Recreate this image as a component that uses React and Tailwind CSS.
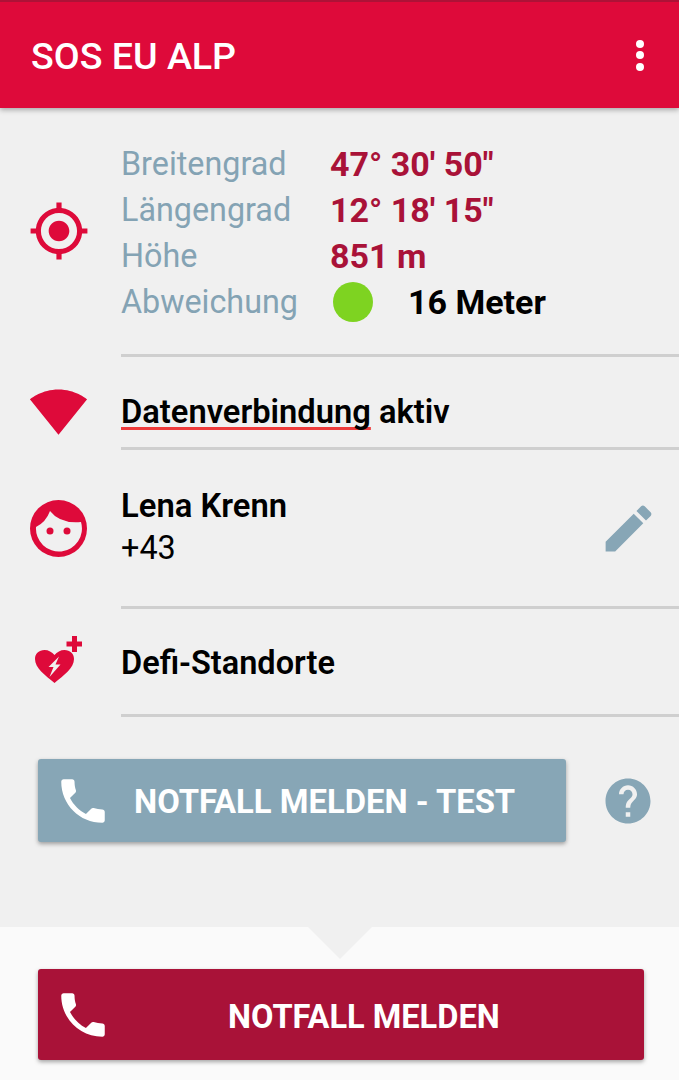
const font = { fontFamily: 'Roboto, sans-serif' }

const Divider = () => <div className="ml-[121px] h-[3px] bg-[#cfcfcf]" />

const PhoneIcon = () => (
  <svg viewBox="0 0 24 24" className="w-[58px] h-[58px] fill-white shrink-0">
    <path d="M6.62 10.79c1.44 2.83 3.76 5.14 6.59 6.59l2.2-2.2c.27-.27.67-.36 1.02-.24 1.12.37 2.33.57 3.57.57.55 0 1 .45 1 1V20c0 .55-.45 1-1 1-9.39 0-17-7.61-17-17 0-.55.45-1 1-1h3.5c.55 0 1 .45 1 1 0 1.25.2 2.45.57 3.57.11.35.03.74-.25 1.02l-2.2 2.2z" />
  </svg>
)

const CoordRow = ({ label, value }) => (
  <div className="flex items-center h-[46px]">
    <span className="w-[209px] mt-[1px] text-[32.3px] text-[#84a3b4]">{label}</span>
    <span className="text-[34px] font-bold text-[#a91238]">{value}</span>
  </div>
)

export default function App() {
  return (
    <div style={font} className="flex flex-col w-[679px] h-[1080px] overflow-hidden bg-[#f0f0f0] text-black">
      {/* Toolbar */}
      <div className="relative z-10 flex items-center justify-between h-[108px] pl-[31px] pr-[35px] bg-[#de0a3a] border-t-2 border-[#ad1237] shadow-[0_2px_5px_rgba(0,0,0,0.3)]">
        <span className="mt-[3px] text-[37.6px] font-medium text-white">SOS EU ALP</span>
        <div className="flex flex-col gap-[3.5px]">
          <div className="w-[8px] h-[8px] rounded-full bg-white" />
          <div className="w-[8px] h-[8px] rounded-full bg-white" />
          <div className="w-[8px] h-[8px] rounded-full bg-white" />
        </div>
      </div>

      {/* Position */}
      <div className="flex items-center pt-[33px] pb-[29px]">
        <div className="w-[122px] pl-[28px]">
          <svg viewBox="0 0 24 24" className="w-[62px] h-[62px] fill-[#de0a3a] -mt-[4px]">
            <path d="M12 8c-2.21 0-4 1.79-4 4s1.79 4 4 4 4-1.79 4-4-1.79-4-4-4zm8.94 3c-.46-4.17-3.77-7.48-7.94-7.94V1h-2v2.06C6.83 3.52 3.52 6.83 3.06 11H1v2h2.06c.46 4.17 3.77 7.48 7.94 7.94V23h2v-2.06c4.17-.46 7.48-3.77 7.94-7.94H23v-2h-2.06zM12 19c-3.87 0-7-3.13-7-7s3.13-7 7-7 7 3.13 7 7-3.13 7-7 7z" />
          </svg>
        </div>
        <div className="-ml-[1px]">
          <CoordRow label="Breitengrad" value={'47° 30\' 50"'} />
          <CoordRow label="Längengrad" value={'12° 18\' 15"'} />
          <CoordRow label="Höhe" value="851 m" />
          <div className="flex items-center h-[46px]">
            <span className="w-[212px] mt-[1px] text-[32.3px] text-[#84a3b4]">Abweichung</span>
            <div className="w-[40px] h-[40px] rounded-full bg-[#7ed321]" />
            <span className="ml-[35px] text-[34px] font-bold">16 Meter</span>
          </div>
        </div>
      </div>
      <Divider />

      {/* Data connection */}
      <div className="flex items-center h-[90px] pt-[21px]">
        <div className="w-[121px] pl-[29px]">
          <svg viewBox="0 0 24 24" className="w-[59px] h-[59px] fill-[#de0a3a] -mt-[3px]">
            <path d="M12.01 21.49L23.64 7c-.45-.34-4.93-4-11.64-4C5.28 3 .81 6.66.36 7l11.63 14.49.01.01.01-.01z" />
          </svg>
        </div>
        <span className="text-[32.7px] font-semibold">
          <span className="underline decoration-[#ee3b3b] decoration-[3px] underline-offset-[4px] [text-decoration-skip-ink:none]">Datenverbindung</span> aktiv
        </span>
      </div>
      <Divider />

      {/* Contact */}
      <div className="flex items-center justify-between h-[156px] pr-[20px]">
        <div className="flex items-center">
          <div className="w-[121px] pl-[30px]">
            <svg viewBox="0 0 57 57" className="w-[57px] h-[57px]">
              <circle cx="28.5" cy="28.5" r="28.5" fill="#de0a3a" />
              <path d="M6 27 Q16 22 20 11 Q30 24 51 22 A23 23 0 1 1 6 27Z" fill="#f0f0f0" />
              <circle cx="20" cy="31" r="3.500" fill="#de0a3a" />
              <circle cx="37" cy="31" r="3.500" fill="#de0a3a" />
            </svg>
          </div>
          <div className="flex flex-col gap-[4px] -mt-[3px]">
            <span className="text-[32.8px] font-semibold leading-[38px]">Lena Krenn</span>
            <span className="text-[32.4px] leading-[38px]">+43</span>
          </div>
        </div>
        <svg viewBox="0 0 24 24" className="w-[61px] h-[61px] fill-[#87a6b6]">
          <path d="M3 17.25V21h3.75L17.81 9.94l-3.75-3.75L3 17.25zM20.71 7.04c.39-.39.39-1.02 0-1.41l-2.34-2.34c-.39-.39-1.02-.39-1.41 0l-1.83 1.83 3.75 3.75 1.83-1.83z" />
        </svg>
      </div>
      <Divider />

      {/* Defi */}
      <div className="flex items-center h-[105px] pt-[3px]">
        <div className="w-[121px] pl-[35px]">
          <svg viewBox="0 0 47 47" className="w-[47px] h-[47px] -mt-[7px]">
            <path d="M19.5 47C10 39 0 32 0 23C0 17.5 4 14 9.5 14C13.5 14 17 16 19.5 19C22 16 25.5 14 29.5 14C35 14 39 17.5 39 23C39 32 29 39 19.5 47Z" fill="#de0a3a" />
            <polygon points="24,20.500 13.500,31 18.500,31 14.500,41 25.500,28.500 20.500,28.500" fill="#f0f0f0" />
            <path d="M37 0h5v5.500h5v5h-5V16h-5v-5.500h-5.500v-5H37z" fill="#de0a3a" />
          </svg>
        </div>
        <span className="text-[32.5px] font-semibold">Defi-Standorte</span>
      </div>
      <Divider />

      {/* Test button */}
      <div className="flex items-center justify-between mt-[42px] pl-[38px] pr-[24px]">
        <div className="flex items-center w-[528px] h-[83px] pl-[16px] rounded-[3px] bg-[#87a6b6] shadow-[0_2px_4px_rgba(0,0,0,0.35)]">
          <PhoneIcon />
          <span className="ml-[22px] mt-[5px] text-[32.8px] font-bold text-white">NOTFALL MELDEN - TEST</span>
        </div>
        <svg viewBox="0 0 24 24" className="w-[54px] h-[54px] fill-[#87a6b6]">
          <path d="M12 2C6.48 2 2 6.48 2 12s4.48 10 10 10 10-4.48 10-10S17.52 2 12 2zm1 17h-2v-2h2v2zm2.07-7.75l-.9.92C13.45 12.9 13 13.500 13 15h-2v-.5c0-1.100.45-2.100 1.170-2.830l1.240-1.260c.37-.36.59-.86.59-1.410 0-1.100-.9-2-2-2s-2 .9-2 2H8c0-2.210 1.790-4 4-4s4 1.790 4 4c0 .88-.36 1.680-.93 2.250z" />
        </svg>
      </div>

      <div className="flex-1" />

      {/* Emergency panel */}
      <div className="relative h-[153px] px-[38px] pt-[42px] bg-[#fafafa]">
        <div className="absolute top-0 left-[308px] w-[64px] h-[32px] bg-[#f0f0f0] [clip-path:polygon(0_0,100%_0,50%_100%)]" />
        <div className="relative flex items-center w-[606px] h-[91px] pl-[16px] rounded-[3px] bg-[#a91238] shadow-[0_2px_4px_rgba(0,0,0,0.35)]">
          <PhoneIcon />
          <span className="ml-[116px] mt-[5px] text-[32.6px] font-bold text-white">NOTFALL MELDEN</span>
        </div>
      </div>
    </div>
  )
}
